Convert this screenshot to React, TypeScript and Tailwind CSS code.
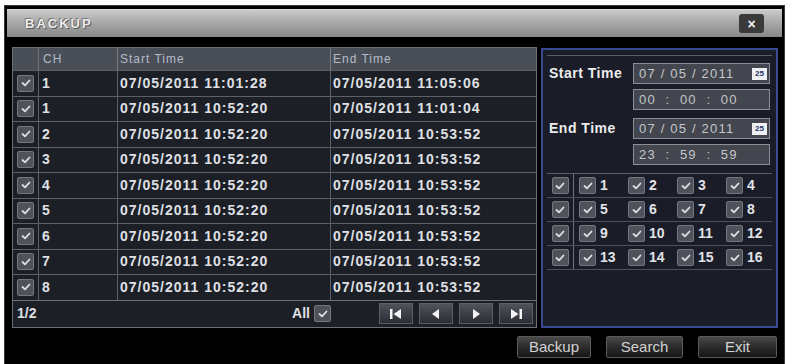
import React from 'react';

const rows = [
  ['1', '07/05/2011 11:01:28', '07/05/2011 11:05:06'],
  ['1', '07/05/2011 10:52:20', '07/05/2011 11:01:04'],
  ['2', '07/05/2011 10:52:20', '07/05/2011 10:53:52'],
  ['3', '07/05/2011 10:52:20', '07/05/2011 10:53:52'],
  ['4', '07/05/2011 10:52:20', '07/05/2011 10:53:52'],
  ['5', '07/05/2011 10:52:20', '07/05/2011 10:53:52'],
  ['6', '07/05/2011 10:52:20', '07/05/2011 10:53:52'],
  ['7', '07/05/2011 10:52:20', '07/05/2011 10:53:52'],
  ['8', '07/05/2011 10:52:20', '07/05/2011 10:53:52'],
];

const channels = [
  [1, 2, 3, 4],
  [5, 6, 7, 8],
  [9, 10, 11, 12],
  [13, 14, 15, 16],
];

function Check() {
  return (
    <span className="flex h-[17px] w-[17px] shrink-0 items-center justify-center rounded-[2px] border border-[#74777e] bg-[#4f525a]">
      <svg width="10" height="8" viewBox="0 0 10 8" fill="none">
        <path d="M1.5 4 L4 6.3 L8.5 1.5" stroke="#dedfe2" strokeWidth="1.8" strokeLinecap="round" strokeLinejoin="round" />
      </svg>
    </span>
  );
}

function NavButton({ kind }: { kind: 'first' | 'prev' | 'next' | 'last' }) {
  return (
    <span className="flex h-[21px] w-[34px] items-center justify-center border border-[#5c5f66] bg-gradient-to-b from-[#50535b] to-[#2b2d33]">
      <svg width="16" height="12" viewBox="0 0 16 12">
        {kind === 'first' && (
          <>
            <rect x="2" y="1" width="2.5" height="10" fill="#f4f4f4" />
            <path d="M13 1 L5.5 6 L13 11 Z" fill="#f4f4f4" />
          </>
        )}
        {kind === 'prev' && <path d="M11 1 L4 6 L11 11 Z" fill="#f4f4f4" />}
        {kind === 'next' && <path d="M5 1 L12 6 L5 11 Z" fill="#f4f4f4" />}
        {kind === 'last' && (
          <>
            <path d="M3 1 L10.5 6 L3 11 Z" fill="#f4f4f4" />
            <rect x="11.5" y="1" width="2.5" height="10" fill="#f4f4f4" />
          </>
        )}
      </svg>
    </span>
  );
}

function Field({ value, cal }: { value: string; cal?: boolean }) {
  return (
    <div className="flex h-[21px] w-[137px] items-center justify-between border border-[#8b8e95] bg-[#43464e] pl-[5px] pr-[2px]">
      <span className="whitespace-pre text-[13px] tracking-[1.2px] text-[#c4c6cb]">{value}</span>
      {cal && (
        <span className="flex h-[12px] w-[15px] items-center justify-center bg-[#eef0f4] text-[8px] font-bold leading-none text-[#24306a]">
          25
        </span>
      )}
    </div>
  );
}

function BottomButton({ label, w }: { label: string; w: string }) {
  return (
    <button
      className={`flex h-[22px] ${w} items-center justify-center rounded-[2px] border border-[#5a5a5a] bg-gradient-to-b from-[#4a4a4a] via-[#2c2c2c] to-[#161616] text-[15px] text-[#d2d2d2]`}
    >
      {label}
    </button>
  );
}

export default function App() {
  return (
    <div className="h-[364px] w-[790px] overflow-hidden bg-white font-['Liberation_Sans',Arial,sans-serif]">
      <div className="ml-[4px] mt-[5px] flex h-[360px] w-[781px] flex-col border-l border-t border-r border-[#3a3a3a] bg-black">
        {/* title bar */}
        <div className="mx-[2px] mt-[3px] flex h-[28px] items-center justify-between border-t border-[#dadada] bg-gradient-to-b from-[#cacaca] via-[#a6a6a6] to-[#878787] pl-[18px] pr-[18px]">
          <span className="text-[13px] font-bold tracking-[2px] text-[#ececec] [text-shadow:1px_1px_0_#5a5a5a,-1px_-1px_0_#7a7a7a]">
            BACKUP
          </span>
          <span className="flex h-[19px] w-[25px] items-center justify-center rounded-[3px] bg-[#3a3a3a] text-[14px] font-bold leading-none text-[#f0f0f0]">
            ×
          </span>
        </div>

        {/* body */}
        <div className="mt-[10px] flex pl-[7px]">
          {/* table */}
          <div className="flex h-[281px] w-[525px] flex-col border border-[#6d7077] bg-[#1d1f27]">
            <div className="grid h-[22px] shrink-0 grid-cols-[26px_79px_213px_1fr] bg-[#4a4e57] text-[12px] tracking-[1px] text-[#b4bccb]">
              <div className="border-r border-[#6d7077]" />
              <div className="flex items-center border-r border-[#7a7d84] pl-[4px]">CH</div>
              <div className="flex items-center border-r border-[#7a7d84] pl-[2px]">Start Time</div>
              <div className="flex items-center pl-[2px]">End Time</div>
            </div>
            {rows.map((r, i) => (
              <div
                key={i}
                className="grid h-[25.5px] shrink-0 grid-cols-[26px_79px_213px_1fr] border-t border-[#5d6067] text-[14px] font-bold tracking-[1px] text-[#dfe0e4]"
              >
                <div className="flex items-center justify-center border-r border-[#5d6067]">
                  <Check />
                </div>
                <div className="flex items-center border-r border-[#5d6067] pl-[3px]">{r[0]}</div>
                <div className="flex items-center border-r border-[#5d6067] pl-[2px]">{r[1]}</div>
                <div className="flex items-center pl-[2px]">{r[2]}</div>
              </div>
            ))}
            <div className="flex flex-1 items-center border-t border-[#6d7077] pl-[4px] pr-[3px] text-[14px] font-bold text-[#dfe0e4]">
              <span>1/2</span>
              <span className="ml-auto mr-[4px]">All</span>
              <Check />
              <div className="ml-[48px] flex gap-[6px]">
                <NavButton kind="first" />
                <NavButton kind="prev" />
                <NavButton kind="next" />
                <NavButton kind="last" />
              </div>
            </div>
          </div>

          {/* right panel */}
          <div className="ml-[4px] mt-[1px] h-[280px] w-[237px] border-2 border-[#3a4a8e] bg-[#1a1c28] px-[4px] pt-[5px]">
            <div className="flex flex-col gap-[5px] border-t border-[#5b5e66] pt-[7px]">
              <div className="flex items-center">
                <span className="w-[86px] pl-[2px] text-[14px] font-bold tracking-[0.5px] text-[#ececec]">Start Time</span>
                <Field value="07 / 05 / 2011" cal />
              </div>
              <div className="flex pl-[86px]">
                <Field value="00  :  00  :  00" />
              </div>
              <div className="mt-[3px] flex items-center">
                <span className="w-[86px] pl-[2px] text-[14px] font-bold tracking-[0.5px] text-[#ececec]">End Time</span>
                <Field value="07 / 05 / 2011" cal />
              </div>
              <div className="flex pl-[86px]">
                <Field value="23  :  59  :  59" />
              </div>
            </div>
            <div className="mt-[8px] flex flex-col border-t border-[#5b5e66]">
              {channels.map((row, i) => (
                <div key={i} className="flex h-[24px] items-center border-b border-[#4d5058]">
                  <div className="flex h-full w-[27px] items-center justify-center border-r border-[#6d7077]">
                    <Check />
                  </div>
                  {row.map((n) => (
                    <div key={n} className="flex w-[49px] items-center gap-[4px] pl-[5px] text-[14px] font-bold text-[#e2e3e7]">
                      <Check />
                      <span>{n}</span>
                    </div>
                  ))}
                </div>
              ))}
            </div>
          </div>
        </div>

        {/* bottom buttons */}
        <div className="mt-[8px] flex justify-end gap-[15px] pr-[7px]">
          <BottomButton label="Backup" w="w-[74px]" />
          <BottomButton label="Search" w="w-[77px]" />
          <BottomButton label="Exit" w="w-[79px]" />
        </div>
      </div>
    </div>
  );
}
